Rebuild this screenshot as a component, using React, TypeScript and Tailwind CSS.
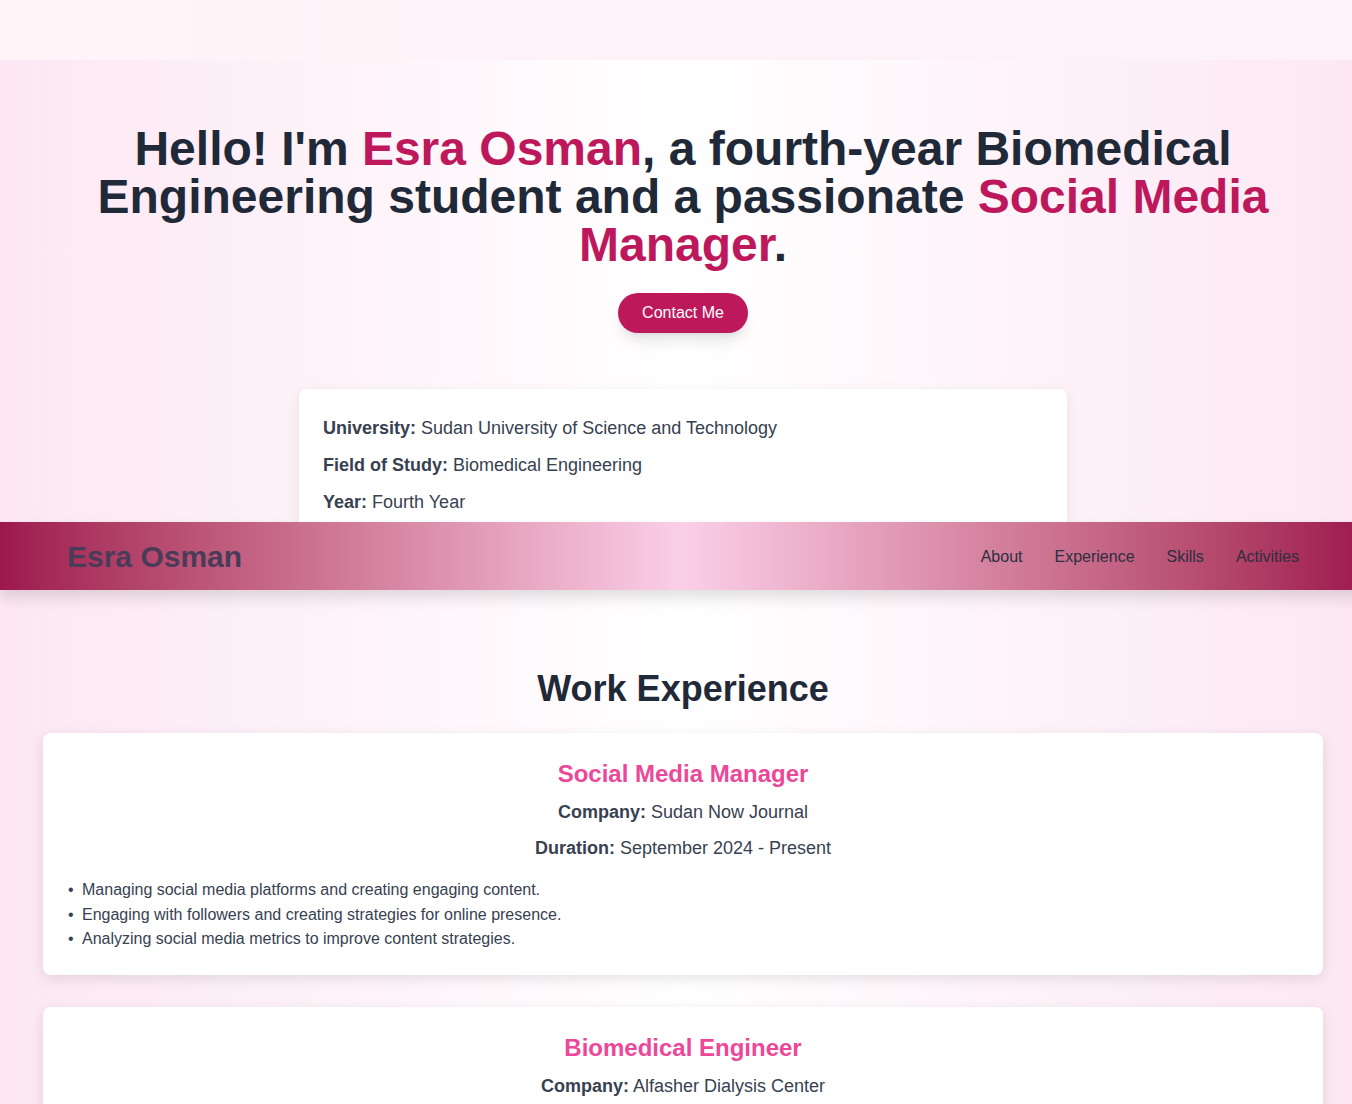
const info = [
  { label: "University:", value: "Sudan University of Science and Technology" },
  { label: "Field of Study:", value: "Biomedical Engineering" },
  { label: "Year:", value: "Fourth Year" },
];

const jobs = [
  {
    title: "Social Media Manager",
    company: "Sudan Now Journal",
    duration: "September 2024 - Present",
    points: [
      "Managing social media platforms and creating engaging content.",
      "Engaging with followers and creating strategies for online presence.",
      "Analyzing social media metrics to improve content strategies.",
    ],
  },
  {
    title: "Biomedical Engineer",
    company: "Alfasher Dialysis Center",
    duration: "January 2023 - August 2024",
    points: [
      "Maintaining and calibrating dialysis machines.",
      "Supporting medical staff with equipment training.",
    ],
  },
];

const links = ["About", "Experience", "Skills", "Activities"];

export default function App() {
  return (
    <div className="w-full overflow-hidden bg-[#fdf2f8] font-['Liberation_Sans',Arial,sans-serif]">
      <div className="w-[1366px]">
        <div className="h-[60px] bg-gradient-to-r from-[#fff5f9] via-[#fdf2f7] to-[#fdf2f7]" />

        <section className="bg-gradient-to-r from-[#fce7f3] via-white to-[#fce7f3] px-16 pt-[65px] text-center">
          <h1 className="text-5xl font-bold leading-none text-[#1f2937]">
            Hello! I'm <span className="text-[#be185d]">Esra Osman</span>, a
            fourth-year Biomedical Engineering student and a passionate{" "}
            <span className="text-[#be185d]">Social Media Manager</span>.
          </h1>
          <button className="mt-6 rounded-full bg-[#be185d] px-6 py-2 text-base leading-6 text-white shadow-lg">
            Contact Me
          </button>

          <div className="mx-auto mt-14 max-w-3xl space-y-2 rounded-t-lg bg-white px-6 pt-[25px] pb-[5px] text-left text-lg text-[#374151] shadow-[0_4px_14px_rgba(0,0,0,0.08)]">
            {info.map((row) => (
              <p key={row.label} className="leading-[29px]">
                <span className="font-bold">{row.label}</span> {row.value}
              </p>
            ))}
          </div>
        </section>

        <nav className="relative z-10 flex h-[68px] items-center justify-between bg-gradient-to-r from-[#9d174d] via-[#fbcfe8] to-[#9d174d] px-[67px] shadow-[0_8px_14px_rgba(0,0,0,0.12)]">
          <span className="mt-[2px] text-3xl font-bold text-[#4a3b58]">Esra Osman</span>
          <div className="mt-[2px] flex gap-8 text-base text-[#2b2f3d]">
            {links.map((l) => (
              <a key={l} href="#">
                {l}
              </a>
            ))}
          </div>
        </nav>

        <section className="bg-gradient-to-r from-[#fce7f3] via-white to-[#fce7f3] px-[43px] pt-[79px] pb-16">
          <h2 className="mb-6 text-center text-4xl font-bold text-[#1f2937]">
            Work Experience
          </h2>
          <div className="space-y-8">
            {jobs.map((job) => (
              <div
                key={job.title}
                className="rounded-lg bg-white px-6 pt-[25px] pb-[23px] text-[#374151] shadow-[0_4px_14px_rgba(0,0,0,0.1)]"
              >
                <h3 className="mb-2 text-center text-2xl font-bold text-[#ec4899]">
                  {job.title}
                </h3>
                <p className="mb-2 text-center text-lg leading-7">
                  <span className="font-bold">Company:</span> {job.company}
                </p>
                <p className="mb-2 text-center text-lg leading-7">
                  <span className="font-bold">Duration:</span> {job.duration}
                </p>
                <ul className="mt-4 text-base leading-[24.5px]">
                  {job.points.map((p) => (
                    <li key={p} className="flex">
                      <span className="w-[15px] shrink-0 pl-[1px]">•</span>
                      <span>{p}</span>
                    </li>
                  ))}
                </ul>
              </div>
            ))}
          </div>
        </section>
      </div>
    </div>
  );
}
